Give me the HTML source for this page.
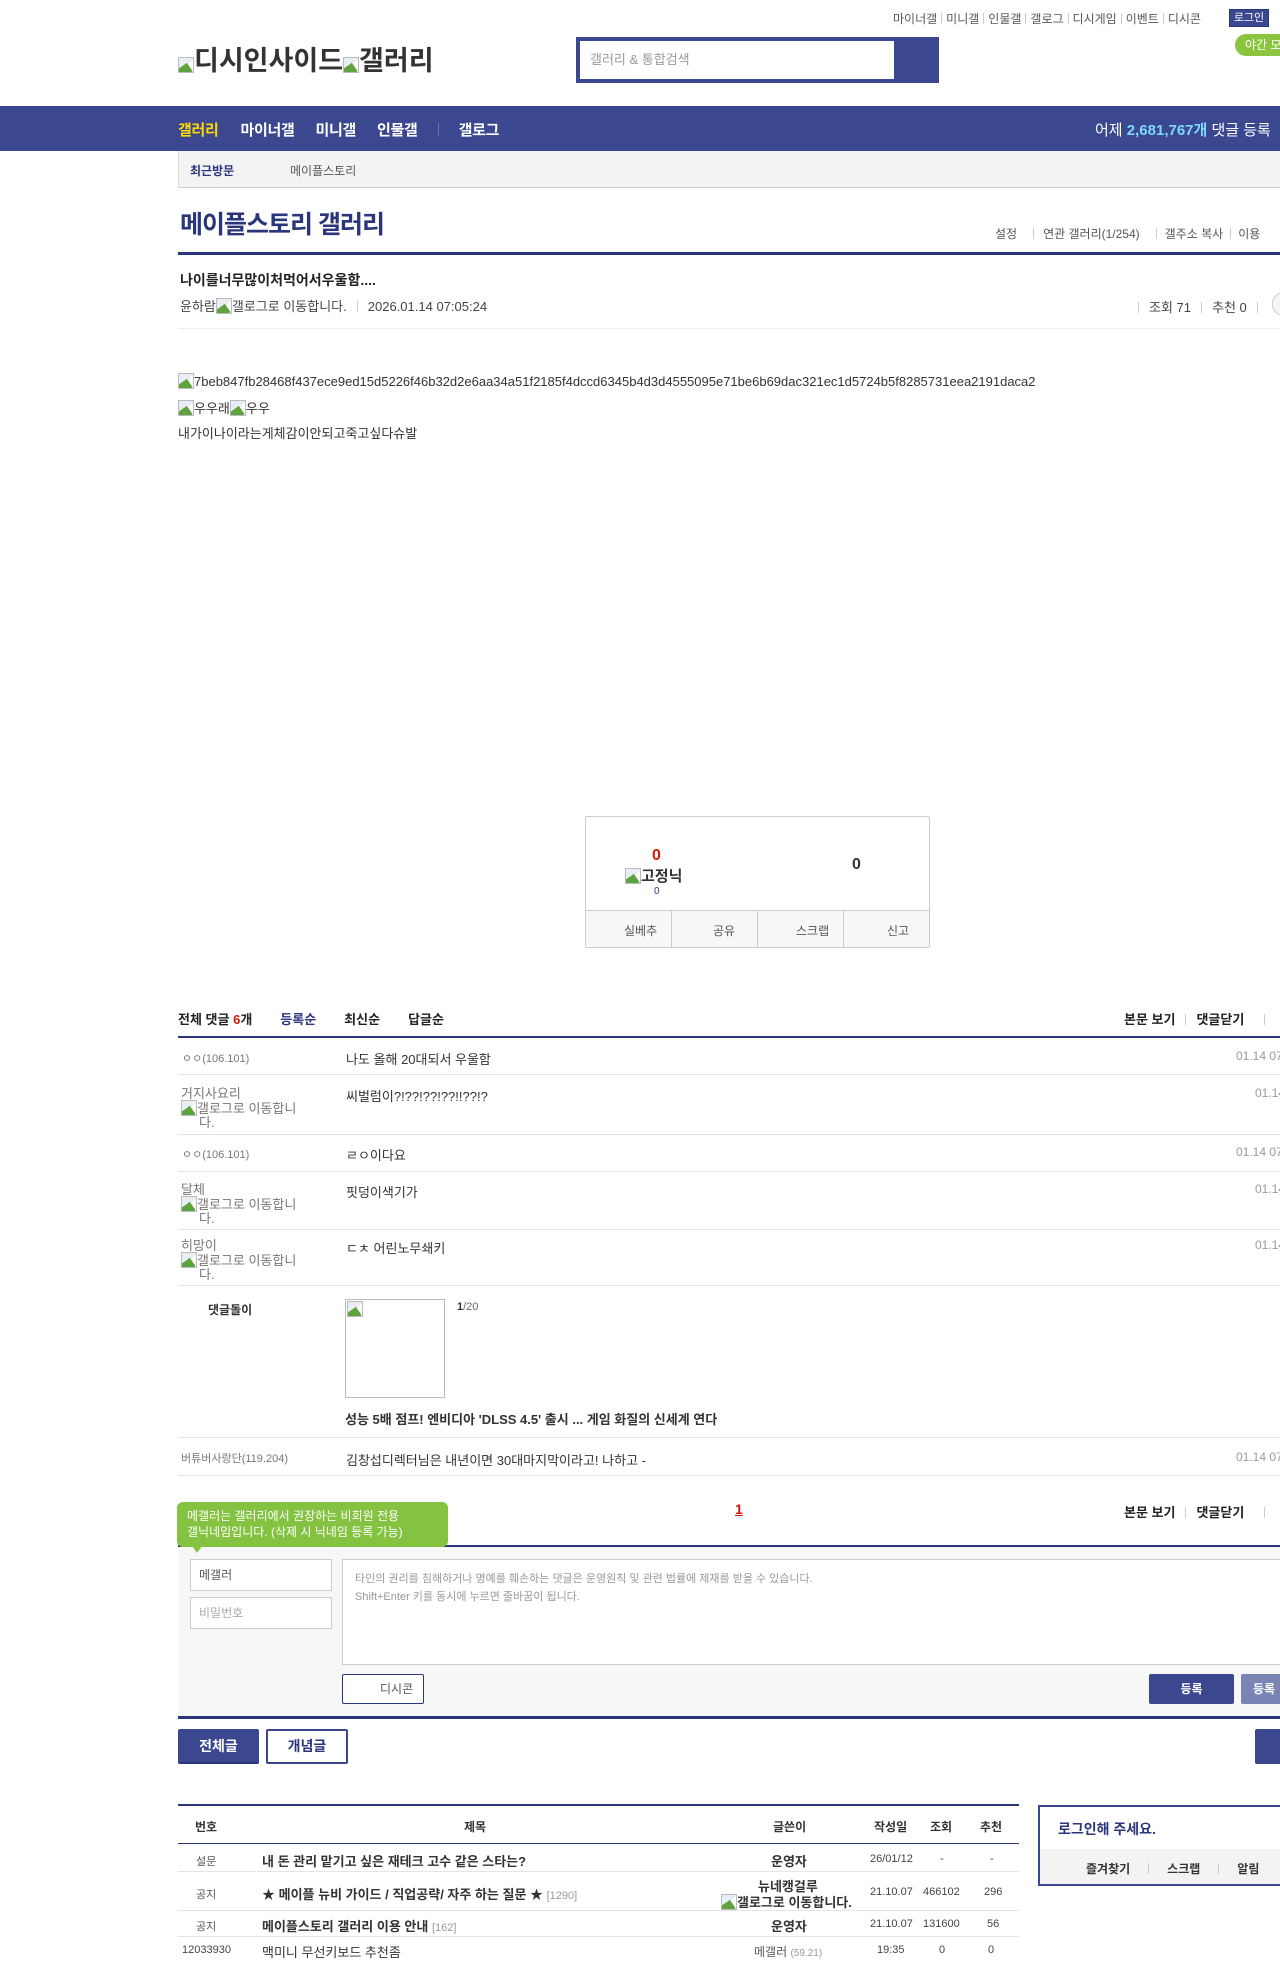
<!DOCTYPE html>
<html><head><meta charset="utf-8">
<style>
*{margin:0;padding:0;box-sizing:border-box}
body{width:1280px;height:1957px;overflow:hidden;position:relative;background:#fff;font-family:"Liberation Sans","Noto Sans CJK KR",sans-serif;font-size:13px;color:#333}
.a{position:absolute;white-space:nowrap}
.bi{display:inline-block;width:16px;height:16px;vertical-align:-3px;background:linear-gradient(135deg,#e8eef6 0 55%,transparent 55%),linear-gradient(#fff,#fff);border:1px solid #bbb;position:relative;overflow:hidden}
.bi:after{content:"";position:absolute;left:-2px;bottom:-4px;width:14px;height:10px;background:#5fa33e;transform:rotate(-35deg)}
.sep{display:inline-block;width:1px;height:11px;background:#ccc;margin:0 6px;vertical-align:-1px}
.hl{position:absolute;left:178px;right:0;height:1px;background:#e5e5e5}
.navy{background:#3b4890}
</style></head><body>

<!-- top links -->
<div class="a" style="left:893px;top:10px;font-size:12px;color:#555">마이너갤<span class="sep" style="margin:0 4px"></span>미니갤<span class="sep" style="margin:0 4px"></span>인물갤<span class="sep" style="margin:0 4px"></span>갤로그<span class="sep" style="margin:0 4px"></span>디시게임<span class="sep" style="margin:0 4px"></span>이벤트<span class="sep" style="margin:0 4px"></span>디시콘</div>
<div class="a navy" style="left:1229px;top:9px;width:40px;height:18px;border:1px solid #29367c;color:#fff;font-size:11px;text-align:center;line-height:16px">로그인</div>
<div class="a" style="left:1235px;top:34px;width:60px;height:22px;border-radius:11px;background:#8bc43f;color:#fff;font-size:12px;line-height:22px;padding-left:10px">야간 모드</div>

<!-- logo -->
<div class="a" style="left:178px;top:39px;font-size:27px;font-weight:bold;color:#333;letter-spacing:0"><span class="bi"></span>디시인사이드<span class="bi"></span>갤러리</div>

<!-- search -->
<div class="a navy" style="left:576px;top:37px;width:363px;height:46px"></div>
<div class="a" style="left:580px;top:41px;width:314px;height:38px;background:#fff;font-size:13px;color:#999;line-height:38px;padding-left:10px">갤러리 &amp; 통합검색</div>

<!-- nav -->
<div class="a navy" style="left:0;top:106px;width:1280px;height:45px"></div>
<div class="a" style="left:178px;top:119px;font-size:15px;font-weight:bold;color:#fff;letter-spacing:-0.3px"><span style="color:#ffd800">갤러리</span><span style="margin-left:22px">마이너갤</span><span style="margin-left:21px">미니갤</span><span style="margin-left:21px">인물갤</span><span style="display:inline-block;width:1px;height:13px;background:#6670aa;margin:0 20px 0 20px;vertical-align:-1px"></span>갤로그</div>
<div class="a" style="left:1095px;top:119px;font-size:15px;color:#fff">어제 <b style="color:#7fd8ff">2,681,767개</b> 댓글 등록</div>

<!-- recent -->
<div class="a" style="left:178px;top:151px;width:1102px;height:37px;background:#f3f3f3;border-bottom:1px solid #ccc;border-left:1px solid #ddd"></div>
<div class="a" style="left:190px;top:162px;font-size:12px;font-weight:bold;color:#29367c">최근방문</div>
<div class="a" style="left:290px;top:162px;font-size:12px;color:#555">메이플스토리</div>

<!-- gallery title -->
<div class="a" style="left:180px;top:205px;font-size:25px;font-weight:bold;color:#29367c;letter-spacing:-1px">메이플스토리 갤러리</div>
<div class="a" style="left:995px;top:225px;font-size:12px;color:#555">설정<span class="sep" style="margin:0 9px 0 16px"></span>연관 갤러리(1/254)<span class="sep" style="margin:0 8px 0 16px"></span>갤주소 복사<span class="sep" style="margin:0 7px"></span>이용</div>
<div class="a" style="left:178px;top:252px;width:1102px;height:3px;background:#29367c"></div>

<!-- post head -->
<div class="a" style="left:180px;top:270px;font-size:14px;font-weight:bold;color:#222">나이를너무많이처먹어서우울함....</div>
<div class="a" style="left:180px;top:296px;font-size:13px;color:#444">윤하람<span class="bi"></span>갤로그로 이동합니다.<span class="sep" style="margin:0 10px"></span>2026.01.14 07:05:24</div>
<div class="a" style="left:1138px;top:297px;font-size:13px;color:#444"><span class="sep" style="margin:0 10px 0 0"></span>조회 71<span class="sep" style="margin:0 10px"></span>추천 0<span class="sep" style="margin:0 10px"></span></div>
<div class="a" style="left:1272px;top:292px;width:24px;height:24px;border:1px solid #ccc;border-radius:12px;background:#f7f7f7"></div>
<div class="hl" style="top:328px;background:#eee"></div>

<!-- content -->
<div class="a" style="left:178px;top:373px;font-size:13px;color:#333"><span class="bi"></span>7beb847fb28468f437ece9ed15d5226f46b32d2e6aa34a51f2185f4dccd6345b4d3d4555095e71be6b69dac321ec1d5724b5f8285731eea2191daca2</div>
<div class="a" style="left:178px;top:398px;font-size:13px;color:#333"><span class="bi"></span>우우래<span class="bi"></span>우우</div>
<div class="a" style="left:178px;top:423px;font-size:13px;color:#333">내가이나이라는게체감이안되고죽고싶다슈발</div>

<!-- recommend box -->
<div class="a" style="left:585px;top:816px;width:345px;height:132px;border:1px solid #ccc;border-radius:2px"></div>
<div class="a" style="left:586px;top:910px;width:343px;height:37px;background:#f7f7f7;border-top:1px solid #ccc"></div>
<div class="a" style="left:671px;top:911px;width:1px;height:36px;background:#ccc"></div>
<div class="a" style="left:757px;top:911px;width:1px;height:36px;background:#ccc"></div>
<div class="a" style="left:843px;top:911px;width:1px;height:36px;background:#ccc"></div>
<div class="a" style="left:624px;top:922px;font-size:12px;color:#555">실베추</div>
<div class="a" style="left:713px;top:922px;font-size:12px;color:#555">공유</div>
<div class="a" style="left:796px;top:922px;font-size:12px;color:#555">스크랩</div>
<div class="a" style="left:887px;top:922px;font-size:12px;color:#555">신고</div>
<div class="a" style="left:652px;top:847px;font-size:16px;font-weight:bold;color:#d31900">0</div>
<div class="a" style="left:625px;top:865px;font-size:15px;font-weight:bold;color:#333"><span class="bi"></span>고정닉</div>
<div class="a" style="left:654px;top:886px;font-size:10px;color:#29367c">0</div>
<div class="a" style="left:852px;top:856px;font-size:16px;font-weight:bold;color:#333">0</div>

<!-- comment header -->
<div class="a" style="left:178px;top:1009px;font-size:13px;font-weight:bold;color:#222">전체 댓글 <span style="color:#d31900">6</span>개<span style="color:#29367c;margin-left:28px">등록순</span><span style="margin-left:28px">최신순</span><span style="margin-left:28px">답글순</span></div>
<div class="a" style="left:1124px;top:1009px;font-size:13px;font-weight:bold;color:#222">본문 보기<span class="sep" style="margin:0 10px"></span>댓글닫기<span class="sep" style="margin:0 0 0 20px"></span></div>
<div class="a" style="left:178px;top:1036px;width:1102px;height:2px;background:#29367c"></div>

<!-- comments -->
<div class="a" style="left:182px;top:1050px;font-size:11px;color:#777">ㅇㅇ(106.101)</div>
<div class="a" style="left:346px;top:1049px;font-size:13px;color:#333">나도 올해 20대되서 우울함</div>
<div class="a" style="left:1236px;top:1049px;font-size:12px;color:#999">01.14 07</div>
<div class="hl" style="top:1074px"></div>

<div class="a" style="left:181px;top:1087px;font-size:13px;color:#777;line-height:13px">거지사요리<br><span class="bi"></span>갤로그로 이동합니<br>&nbsp;&nbsp;&nbsp;&nbsp;&nbsp;다.</div>
<div class="a" style="left:346px;top:1086px;font-size:13px;color:#333">씨벌럼이?!??!??!??!!??!?</div>
<div class="a" style="left:1255px;top:1086px;font-size:12px;color:#999">01.14</div>
<div class="hl" style="top:1134px"></div>

<div class="a" style="left:182px;top:1146px;font-size:11px;color:#777">ㅇㅇ(106.101)</div>
<div class="a" style="left:346px;top:1145px;font-size:13px;color:#333">ㄹㅇ이다요</div>
<div class="a" style="left:1236px;top:1145px;font-size:12px;color:#999">01.14 07</div>
<div class="hl" style="top:1171px"></div>

<div class="a" style="left:181px;top:1183px;font-size:13px;color:#777;line-height:13px">달체<br><span class="bi"></span>갤로그로 이동합니<br>&nbsp;&nbsp;&nbsp;&nbsp;&nbsp;다.</div>
<div class="a" style="left:346px;top:1182px;font-size:13px;color:#333">핏덩이색기가</div>
<div class="a" style="left:1255px;top:1182px;font-size:12px;color:#999">01.14</div>
<div class="hl" style="top:1229px"></div>

<div class="a" style="left:181px;top:1239px;font-size:13px;color:#777;line-height:13px">히망이<br><span class="bi"></span>갤로그로 이동합니<br>&nbsp;&nbsp;&nbsp;&nbsp;&nbsp;다.</div>
<div class="a" style="left:346px;top:1238px;font-size:13px;color:#333">ㄷㅊ 어린노무쇄키</div>
<div class="a" style="left:1255px;top:1238px;font-size:12px;color:#999">01.14</div>
<div class="hl" style="top:1285px"></div>

<div class="a" style="left:208px;top:1301px;font-size:12px;font-weight:bold;color:#333">댓글돌이</div>
<div class="a" style="left:345px;top:1299px;width:100px;height:99px;border:1px solid #bbb"><span class="bi" style="position:absolute;left:1px;top:1px"></span></div>
<div class="a" style="left:457px;top:1301px;font-size:11px;color:#666"><b style="color:#333">1</b>/20</div>
<div class="a" style="left:345px;top:1409px;font-size:13px;font-weight:bold;color:#333">성능 5배 점프! 엔비디아 'DLSS 4.5' 출시 ... 게임 화질의 신세계 연다</div>
<div class="hl" style="top:1437px"></div>

<div class="a" style="left:181px;top:1450px;font-size:11px;color:#777">버튜버사랑단(119.204)</div>
<div class="a" style="left:346px;top:1450px;font-size:13px;color:#333">김창섭디렉터님은 내년이면 30대마지막이라고! 나하고 -</div>
<div class="a" style="left:1236px;top:1450px;font-size:12px;color:#999">01.14 07</div>
<div class="hl" style="top:1475px"></div>

<!-- pagination -->
<div class="a" style="left:735px;top:1501px;font-size:14px;font-weight:bold;color:#d31900;text-decoration:underline">1</div>
<div class="a" style="left:1124px;top:1502px;font-size:13px;font-weight:bold;color:#222">본문 보기<span class="sep" style="margin:0 10px"></span>댓글닫기<span class="sep" style="margin:0 0 0 20px"></span></div>

<!-- write area -->
<div class="a" style="left:178px;top:1545px;width:1102px;height:172px;background:#f7f7f7;border-top:2px solid #29367c"></div>
<div class="a" style="left:177px;top:1502px;width:271px;height:45px;background:#84c341;border-radius:6px;color:#fff;font-size:12px;line-height:16px;padding:6px 0 0 10px;white-space:normal">메갤러는 갤러리에서 권장하는 비회원 전용<br>갤닉네임입니다. (삭제 시 닉네임 등록 가능)</div>
<div class="a" style="left:192px;top:1546px;width:0;height:0;border-left:5px solid transparent;border-right:5px solid transparent;border-top:7px solid #84c341"></div>
<div class="a" style="left:190px;top:1559px;width:142px;height:32px;background:#fff;border:1px solid #ccc;font-size:12px;color:#555;line-height:30px;padding-left:8px">메갤러</div>
<div class="a" style="left:190px;top:1597px;width:142px;height:32px;background:#fff;border:1px solid #ccc;font-size:12px;color:#aaa;line-height:30px;padding-left:8px">비밀번호</div>
<div class="a" style="left:342px;top:1559px;width:950px;height:106px;background:#fff;border:1px solid #ccc;font-size:11px;color:#999;line-height:18px;padding:10px 0 0 12px">타인의 권리를 침해하거나 명예를 훼손하는 댓글은 운영원칙 및 관련 법률에 제재를 받을 수 있습니다.<br>Shift+Enter 키를 동시에 누르면 줄바꿈이 됩니다.</div>
<div class="a" style="left:342px;top:1674px;width:82px;height:30px;background:#fff;border:1px solid #29367c;border-radius:2px;font-size:12px;color:#555;line-height:28px;padding-left:37px">디시콘</div>
<div class="a navy" style="left:1149px;top:1674px;width:85px;height:30px;border-radius:2px;color:#fff;font-size:12px;font-weight:bold;text-align:center;line-height:30px">등록</div>
<div class="a" style="left:1241px;top:1674px;width:60px;height:30px;border-radius:2px;background:#7a84b5;color:#fff;font-size:12px;font-weight:bold;line-height:30px;padding-left:12px">등록</div>
<div class="a" style="left:178px;top:1716px;width:1102px;height:3px;background:#29367c"></div>

<!-- list buttons -->
<div class="a navy" style="left:178px;top:1729px;width:81px;height:35px;border-radius:2px;color:#fff;font-size:14px;font-weight:bold;text-align:center;line-height:35px;border-bottom:2px solid #29367c">전체글</div>
<div class="a" style="left:266px;top:1729px;width:82px;height:35px;border:2px solid #3b4890;border-radius:2px;color:#29367c;font-size:14px;font-weight:bold;text-align:center;line-height:31px">개념글</div>
<div class="a navy" style="left:1255px;top:1729px;width:40px;height:35px;border-radius:2px"></div>

<!-- list table -->
<div class="a" style="left:178px;top:1804px;width:841px;height:2px;background:#29367c"></div>
<div class="a" style="left:178px;top:1843px;width:841px;height:1px;background:#29367c"></div>
<div class="a" style="left:195px;top:1818px;font-size:12px;font-weight:bold;color:#333">번호</div>
<div class="a" style="left:464px;top:1818px;font-size:12px;font-weight:bold;color:#333">제목</div>
<div class="a" style="left:773px;top:1818px;font-size:12px;font-weight:bold;color:#333">글쓴이</div>
<div class="a" style="left:874px;top:1818px;font-size:12px;font-weight:bold;color:#333">작성일</div>
<div class="a" style="left:930px;top:1818px;font-size:12px;font-weight:bold;color:#333">조회</div>
<div class="a" style="left:980px;top:1818px;font-size:12px;font-weight:bold;color:#333">추천</div>

<div class="a" style="left:196px;top:1853px;font-size:11px;color:#555">설문</div>
<div class="a" style="left:262px;top:1851px;font-size:13px;font-weight:bold;color:#333">내 돈 관리 맡기고 싶은 재테크 고수 같은 스타는?</div>
<div class="a" style="left:771px;top:1851px;font-size:13px;font-weight:bold;color:#333">운영자</div>
<div class="a" style="left:870px;top:1853px;font-size:11px;color:#444">26/01/12</div>
<div class="a" style="left:940px;top:1853px;font-size:11px;color:#444">-</div>
<div class="a" style="left:990px;top:1853px;font-size:11px;color:#444">-</div>
<div class="a" style="left:178px;top:1871px;width:841px;height:1px;background:#e5e5e5"></div>

<div class="a" style="left:196px;top:1886px;font-size:11px;color:#555">공지</div>
<div class="a" style="left:262px;top:1884px;font-size:13px;font-weight:bold;color:#333">★ 메이플 뉴비 가이드 / 직업공략/ 자주 하는 질문 ★ <span style="font-weight:normal;color:#999;font-size:11px">[1290]</span></div>
<div class="a" style="left:758px;top:1876px;font-size:13px;font-weight:bold;color:#333">뉴네캥걸루</div>
<div class="a" style="left:721px;top:1892px;font-size:13px;font-weight:bold;color:#333"><span class="bi"></span>갤로그로 이동합니다.</div>
<div class="a" style="left:870px;top:1886px;font-size:11px;color:#444">21.10.07</div>
<div class="a" style="left:923px;top:1886px;font-size:11px;color:#444">466102</div>
<div class="a" style="left:984px;top:1886px;font-size:11px;color:#444">296</div>
<div class="a" style="left:178px;top:1910px;width:841px;height:1px;background:#e5e5e5"></div>

<div class="a" style="left:196px;top:1918px;font-size:11px;color:#555">공지</div>
<div class="a" style="left:262px;top:1916px;font-size:13px;font-weight:bold;color:#333">메이플스토리 갤러리 이용 안내 <span style="font-weight:normal;color:#999;font-size:11px">[162]</span></div>
<div class="a" style="left:771px;top:1916px;font-size:13px;font-weight:bold;color:#333">운영자</div>
<div class="a" style="left:870px;top:1918px;font-size:11px;color:#444">21.10.07</div>
<div class="a" style="left:923px;top:1918px;font-size:11px;color:#444">131600</div>
<div class="a" style="left:987px;top:1918px;font-size:11px;color:#444">56</div>
<div class="a" style="left:178px;top:1936px;width:841px;height:1px;background:#e5e5e5"></div>

<div class="a" style="left:182px;top:1944px;font-size:11px;color:#444">12033930</div>
<div class="a" style="left:262px;top:1942px;font-size:13px;color:#333">맥미니 무선키보드 추천좀</div>
<div class="a" style="left:754px;top:1943px;font-size:12px;color:#555">메갤러 <span style="color:#999;font-size:10px">(59.21)</span></div>
<div class="a" style="left:877px;top:1944px;font-size:11px;color:#444">19:35</div>
<div class="a" style="left:939px;top:1944px;font-size:11px;color:#444">0</div>
<div class="a" style="left:988px;top:1944px;font-size:11px;color:#444">0</div>

<!-- login box -->
<div class="a" style="left:1038px;top:1805px;width:260px;height:81px;border:2px solid #3b4890;border-right:none"></div>
<div class="a" style="left:1040px;top:1849px;width:240px;height:35px;background:#f3f3f3"></div>
<div class="a" style="left:1058px;top:1819px;font-size:14px;font-weight:bold;color:#29367c">로그인해 주세요.</div>
<div class="a" style="left:1086px;top:1860px;font-size:12px;font-weight:bold;color:#333">즐겨찾기<span class="sep" style="margin:0 18px"></span>스크랩<span class="sep" style="margin:0 18px"></span>알림</div>

</body></html>
